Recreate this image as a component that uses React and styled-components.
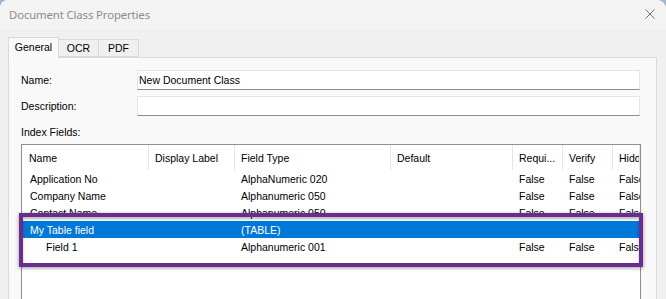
import React from "react";
import styled, { createGlobalStyle } from "styled-components";

const GlobalStyle = createGlobalStyle`
  html, body {
    margin: 0;
    padding: 0;
    background: #9fb6cf;
    overflow: hidden;
  }
  * { box-sizing: border-box; }
`;

const Window = styled.div`
  width: 666px;
  height: 299px;
  overflow: hidden;
  background: #f0f0f0;
  border-radius: 8px 9px 0 0;
  font-family: "Liberation Sans", Arial, sans-serif;
  font-size: 10.5px;
  color: #000;
  display: flex;
  flex-direction: column;
`;

const TitleBar = styled.div`
  height: 30px;
  flex: none;
  background: #f3f3f3;
  display: flex;
  align-items: center;
  padding: 0 11px 0 9px;
`;

const Title = styled.div`
  flex: 1;
  font-family: "Noto Sans", "Open Sans", sans-serif;
  font-size: 11.3px;
  color: #8c8c8c;
  letter-spacing: -0.1px;
  padding-bottom: 1px;
`;

const CloseButton = styled.div`
  width: 10px;
  height: 10px;
  display: flex;
  margin-bottom: 2px;
`;

const Body = styled.div`
  flex: 1;
  padding: 7px 9px 0 8px;
  display: flex;
  flex-direction: column;
`;

const TabStrip = styled.div`
  display: flex;
  align-items: flex-end;
  height: 21px;
  margin-bottom: -1px;
  position: relative;
  z-index: 1;
`;

const Tab = styled.div`
  position: relative;
  width: ${(p) => p.$w}px;
  height: ${(p) => (p.$active ? 21 : 18)}px;
  margin-bottom: ${(p) => (p.$active ? 0 : 1)}px;
  margin-left: ${(p) => (p.$first ? 0 : -1)}px;
  z-index: ${(p) => (p.$active ? 2 : 1)};
  background: ${(p) => (p.$active ? "#f9f9f9" : "#f0f0f0")};
  border: 1px solid #d9d9d9;
  border-bottom: ${(p) => (p.$active ? "none" : "1px solid #d9d9d9")};
  display: flex;
  align-items: center;
  justify-content: center;
  padding-bottom: ${(p) => (p.$active ? 2 : 0)}px;
`;

const Panel = styled.div`
  flex: 1;
  background: #f9f9f9;
  border: 1px solid #dadada;
  border-bottom: none;
  padding: 12px 15px 0 12px;
  display: flex;
  flex-direction: column;
`;

const FieldRow = styled.div`
  display: grid;
  grid-template-columns: 116px 1fr;
  align-items: center;
  height: 20px;
  margin-bottom: 6px;
`;

const Label = styled.div`
  line-height: 13px;
  padding-top: 1px;
`;

const Input = styled.div`
  height: 20px;
  background: #fff;
  border: 1px solid #e4e4e4;
  border-bottom-color: #8b8b8b;
  margin-right: 1px;
  padding: 0 1px;
  display: flex;
  align-items: center;
`;

const SectionLabel = styled.div`
  margin-top: 3px;
  padding-top: 1px;
  line-height: 13px;
`;

const ListFrame = styled.div`
  position: relative;
  margin-top: 5px;
  height: 200px;
`;

const ListView = styled.div`
  height: 100%;
  background: #fff;
  border: 1px solid #8f8f8f;
  overflow: hidden;
`;

const GridRow = styled.div`
  display: grid;
  grid-template-columns: 127px 86px 156px 122px 50px 50px 1fr;
  height: ${(p) => (p.$header ? 25 : 17)}px;
  background: ${(p) => (p.$selected ? "#0078d7" : "transparent")};
  color: ${(p) => (p.$selected ? "#fff" : "#000")};
  white-space: nowrap;
`;

const HeadCell = styled.div`
  display: flex;
  align-items: center;
  padding-left: ${(p) => (p.$first ? 7 : 6)}px;
  border-right: 1px solid #e5e5e5;
  overflow: hidden;
`;

const Cell = styled.div`
  display: flex;
  align-items: center;
  padding-left: ${(p) => 6 + (p.$indent || 0)}px;
  overflow: hidden;
`;

const Highlight = styled.div`
  position: absolute;
  left: -2px;
  top: 69px;
  width: 624px;
  height: 54px;
  border: 4px solid #6a2c8f;
  box-shadow: 0 1px 4px rgba(0, 0, 0, 0.4), inset 0 2px 3px rgba(0, 0, 0, 0.28);
  pointer-events: none;
`;

const columns = ["Name", "Display Label", "Field Type", "Default", "Requi...", "Verify", "Hidden"];

const rows = [
  { name: "Application No", type: "AlphaNumeric 020", flags: true },
  { name: "Company Name", type: "Alphanumeric 050", flags: true },
  { name: "Contact Name", type: "Alphanumeric 050", flags: true },
  { name: "My Table field", type: "(TABLE)", flags: false, selected: true },
  { name: "Field 1", type: "Alphanumeric 001", flags: true, indent: 16 },
];

export default function App() {
  return (
    <>
      <GlobalStyle />
      <Window>
        <TitleBar>
          <Title>Document Class Properties</Title>
          <CloseButton>
            <svg width="10" height="10" viewBox="0 0 10 10">
              <path d="M0.5 0.5 L9.5 9.5 M9.5 0.5 L0.5 9.5" stroke="#707070" strokeWidth="1" fill="none" />
            </svg>
          </CloseButton>
        </TitleBar>
        <Body>
          <TabStrip>
            <Tab $active $first $w={51}>General</Tab>
            <Tab $w={41}>OCR</Tab>
            <Tab $w={41}>PDF</Tab>
          </TabStrip>
          <Panel>
            <FieldRow>
              <Label>Name:</Label>
              <Input>New Document Class</Input>
            </FieldRow>
            <FieldRow>
              <Label>Description:</Label>
              <Input />
            </FieldRow>
            <SectionLabel>Index Fields:</SectionLabel>
            <ListFrame>
              <ListView>
                <GridRow $header>
                  {columns.map((c, i) => (
                    <HeadCell key={c} $first={i === 0}>{c}</HeadCell>
                  ))}
                </GridRow>
                {rows.map((r) => (
                  <GridRow key={r.name} $selected={r.selected}>
                    <Cell $indent={(r.indent || 0) + 2}>{r.name}</Cell>
                    <Cell />
                    <Cell>{r.type}</Cell>
                    <Cell />
                    <Cell>{r.flags ? "False" : ""}</Cell>
                    <Cell>{r.flags ? "False" : ""}</Cell>
                    <Cell>{r.flags ? "False" : ""}</Cell>
                  </GridRow>
                ))}
              </ListView>
              <Highlight />
            </ListFrame>
          </Panel>
        </Body>
      </Window>
    </>
  );
}
